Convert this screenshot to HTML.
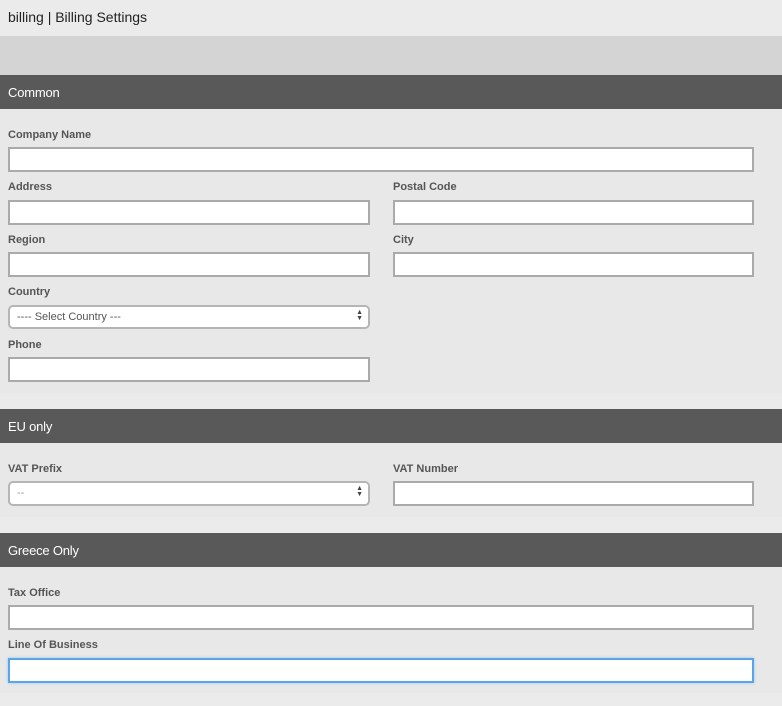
<!DOCTYPE html>
<html><head><meta charset="utf-8"><style>
*{box-sizing:border-box;margin:0;padding:0}
body{width:782px;height:706px;background:#ebebeb;font-family:"Liberation Sans",Arial,sans-serif;position:relative;overflow:hidden}
.a{position:absolute}
.title{left:8px;top:9px;font-size:14px;color:#222}
.band{left:0;top:36px;width:782px;height:39px;background:#d4d4d4}
.hd{left:0;width:782px;height:34px;background:#595959;color:#fff;font-size:13px;padding:10px 8px 0;letter-spacing:-0.2px}
.body{left:0;width:782px;background:#e8e8e8}
.lb{font-size:11px;font-weight:bold;color:#555}
.in{height:25px;background:#fff;border:2px solid #aaa}
.sel{height:24px;background:#fff;border:2px solid #b5b5b5;border-radius:5px;font-size:11px;color:#555;padding:4px 0 0 7px}
.sel .ar{position:absolute;right:5px;top:3px;font-size:7px;line-height:6px;color:#444}
</style></head><body>
<div class="a title">billing | Billing Settings</div>
<div class="a band"></div>

<div class="a hd" style="top:75px">Common</div>
<div class="a body" style="top:109px;height:284px"></div>
<div class="a lb" style="left:8px;top:129px">Company Name</div>
<div class="a in" style="left:8px;top:147px;width:746px"></div>
<div class="a lb" style="left:8px;top:181px">Address</div>
<div class="a in" style="left:8px;top:200px;width:362px"></div>
<div class="a lb" style="left:393px;top:181px">Postal Code</div>
<div class="a in" style="left:393px;top:200px;width:361px"></div>
<div class="a lb" style="left:8px;top:234px">Region</div>
<div class="a in" style="left:8px;top:252px;width:362px"></div>
<div class="a lb" style="left:393px;top:234px">City</div>
<div class="a in" style="left:393px;top:252px;width:361px"></div>
<div class="a lb" style="left:8px;top:286px">Country</div>
<div class="a sel" style="left:8px;top:305px;width:362px">---- Select Country ---<span class="ar">▲<br>▼</span></div>
<div class="a lb" style="left:8px;top:339px">Phone</div>
<div class="a in" style="left:8px;top:357px;width:362px"></div>

<div class="a hd" style="top:409px">EU only</div>
<div class="a body" style="top:443px;height:74px"></div>
<div class="a lb" style="left:8px;top:463px">VAT Prefix</div>
<div class="a sel" style="left:8px;top:481px;width:362px;height:25px;color:#999">--<span class="ar">▲<br>▼</span></div>
<div class="a lb" style="left:393px;top:463px">VAT Number</div>
<div class="a in" style="left:393px;top:481px;width:361px"></div>

<div class="a hd" style="top:533px">Greece Only</div>
<div class="a body" style="top:567px;height:126px"></div>
<div class="a lb" style="left:8px;top:587px">Tax Office</div>
<div class="a in" style="left:8px;top:605px;width:746px"></div>
<div class="a lb" style="left:8px;top:639px">Line Of Business</div>
<div class="a in" style="left:8px;top:658px;width:746px;border-color:#5aa5e6;box-shadow:0 0 3px #9cc8ef"></div>
</body></html>
